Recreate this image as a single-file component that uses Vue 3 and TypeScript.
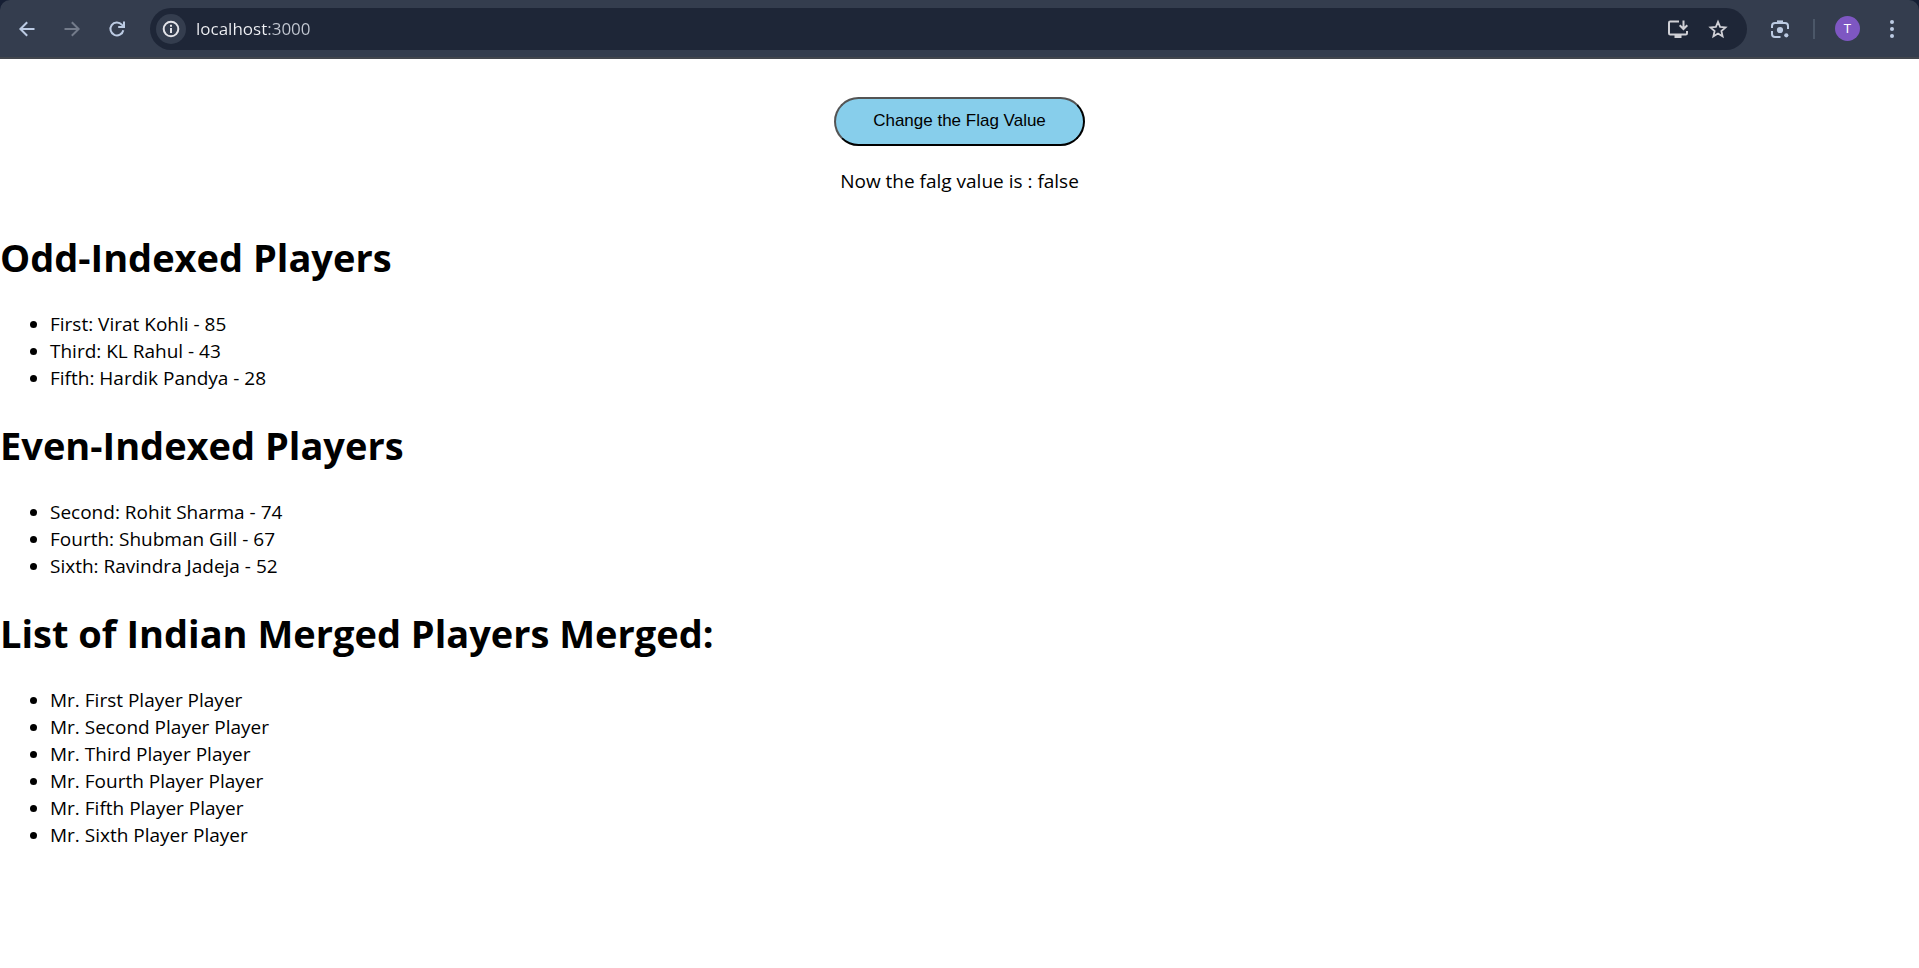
<script setup lang="ts">
import { ref } from 'vue'

interface Player {
  position: string
  name: string
  runs: number
}

const address = ref('localhost:3000')
const flag = ref(false)

const players: Player[] = [
  { position: 'First', name: 'Virat Kohli', runs: 85 },
  { position: 'Second', name: 'Rohit Sharma', runs: 74 },
  { position: 'Third', name: 'KL Rahul', runs: 43 },
  { position: 'Fourth', name: 'Shubman Gill', runs: 67 },
  { position: 'Fifth', name: 'Hardik Pandya', runs: 28 },
  { position: 'Sixth', name: 'Ravindra Jadeja', runs: 52 },
]

const oddPlayers = players.filter((_, index) => index % 2 === 0)
const evenPlayers = players.filter((_, index) => index % 2 === 1)
const mergedPlayers = players.map((player) => `Mr. ${player.position} Player`)
</script>

<template>
  <div class="window">
    <div class="frame">
      <header class="toolbar">
        <nav class="nav" aria-label="History">
          <button class="tool" type="button" aria-label="Back">
            <svg class="icon" viewBox="0 0 20 20" fill="none" stroke="currentColor" stroke-width="2">
              <path d="M17.5 10H4M10.2 3.2 3.4 10l6.8 6.8" />
            </svg>
          </button>
          <button class="tool tool-off" type="button" aria-label="Forward" disabled>
            <svg class="icon" viewBox="0 0 20 20" fill="none" stroke="currentColor" stroke-width="2">
              <path d="M2.5 10H16M9.8 3.2l6.8 6.8-6.8 6.8" />
            </svg>
          </button>
          <button class="tool" type="button" aria-label="Reload">
            <svg class="icon" viewBox="0 0 20 20" fill="none" stroke="currentColor" stroke-width="2">
              <path d="M16.3 11.2A6.5 6.5 0 1 1 14.8 5.6L16.6 7.4" />
              <path d="M17 2.4V8H11.2" />
            </svg>
          </button>
        </nav>

        <div class="omnibox">
          <button class="site-info" type="button" aria-label="View site information">
            <svg class="icon" viewBox="0 0 20 20" fill="none" stroke="currentColor" stroke-width="2">
              <circle cx="10" cy="10" r="7.3" />
              <path d="M10 9v5M10 5.8v2" />
            </svg>
          </button>
          <input v-model="address" class="address" type="text" aria-label="Address" spellcheck="false" />
          <button class="inner-tool" type="button" aria-label="Install app">
            <svg class="wide-icon" viewBox="0 0 22 20" fill="none" stroke="currentColor" stroke-width="2">
              <path d="M12 2.5H3.2Q2 2.5 2 3.7V14.3Q2 15.5 3.2 15.5H18.8Q20 15.5 20 14.3V12" />
              <path d="M16.5 1.5V9.5M12.7 6.2l3.8 3.8 3.8-3.8" />
              <path d="M7.5 17.5h7" stroke-width="3" />
            </svg>
          </button>
          <button class="inner-tool" type="button" aria-label="Bookmark this tab">
            <svg class="icon" viewBox="0 0 20 20" fill="none" stroke="currentColor" stroke-width="1.8">
              <path d="M10 2.9l2.1 5 5.4.5-4.1 3.6 1.2 5.3-4.6-2.8-4.6 2.8 1.2-5.3-4.1-3.6 5.4-.5z" />
            </svg>
          </button>
        </div>

        <button class="lens" type="button" aria-label="Search with Lens">
          <svg class="icon" viewBox="0 0 20 20" fill="none" stroke="currentColor" stroke-width="2">
            <path d="M2 9V7Q2 4 5 4H15Q18 4 18 7V10M2 12V15Q2 18 5 18H10.5" />
            <path d="M7 2.7h6" stroke-width="2.6" />
            <circle cx="10" cy="11" r="3.1" fill="currentColor" stroke="none" />
            <circle cx="16.3" cy="16.3" r="2.1" fill="currentColor" stroke="none" />
          </svg>
        </button>
        <span class="divider"></span>
        <button class="avatar" type="button" aria-label="Profile">T</button>
        <button class="menu" type="button" aria-label="Menu">
          <svg class="icon" viewBox="0 0 20 20" fill="currentColor">
            <circle cx="10" cy="3" r="2" />
            <circle cx="10" cy="10" r="2" />
            <circle cx="10" cy="17" r="2" />
          </svg>
        </button>
      </header>
    </div>

    <main>
      <section class="flag">
        <button class="flag-button" type="button" @click="flag = !flag">Change the Flag Value</button>
        <p>Now the falg value is : {{ flag }}</p>
      </section>

      <h1>Odd-Indexed Players</h1>
      <ul>
        <li v-for="player in oddPlayers" :key="player.position">
          {{ player.position }}: {{ player.name }} - {{ player.runs }}
        </li>
      </ul>

      <h1>Even-Indexed Players</h1>
      <ul>
        <li v-for="player in evenPlayers" :key="player.position">
          {{ player.position }}: {{ player.name }} - {{ player.runs }}
        </li>
      </ul>

      <h1>List of Indian Merged Players Merged:</h1>
      <ul>
        <li v-for="player in mergedPlayers" :key="player">{{ player }} Player</li>
      </ul>
    </main>
  </div>
</template>

<style>
body {
  margin: 0;
  background: #fff;
}
</style>

<style scoped>
.window {
  color: #000;
  font-family: 'Segoe UI', 'Open Sans', 'Noto Sans', sans-serif;
  font-size: 19px;
  line-height: 27px;
}

.frame {
  background: #161f34;
}

.toolbar {
  display: flex;
  align-items: center;
  box-sizing: border-box;
  height: 59px;
  padding: 0 15px 0 11px;
  border-bottom: 2px solid #42464d;
  border-radius: 10px 10px 0 0;
  background: #343d4e;
  color: #bccbe3;
}

.toolbar button {
  display: flex;
  flex: none;
  align-items: center;
  justify-content: center;
  padding: 0;
  border: 0;
  background: none;
  color: inherit;
}

.icon {
  width: 20px;
  height: 20px;
}

.wide-icon {
  width: 22px;
  height: 20px;
}

.nav {
  display: flex;
  gap: 13px;
  margin-right: 17px;
}

.toolbar .tool {
  width: 32px;
  height: 32px;
}

.toolbar .tool-off {
  color: #737b8a;
}

.omnibox {
  display: flex;
  flex: 1;
  align-items: center;
  gap: 10px;
  min-width: 0;
  height: 42px;
  padding: 0 14px 0 6px;
  box-sizing: border-box;
  border-radius: 21px;
  background: #1e2637;
  color: #d0d0d6;
}

.toolbar .site-info {
  width: 30px;
  height: 30px;
  border-radius: 50%;
  background: #343d4e;
  color: #e3e3e8;
}

.address {
  flex: 1;
  min-width: 0;
  padding: 0;
  border: 0;
  outline: 0;
  background: linear-gradient(90deg, #f0f1f5 72px, #c3c8d2 72px) text;
  color: transparent;
  caret-color: #f0f1f5;
  font: 17px/24px 'Segoe UI', 'Open Sans', 'Noto Sans', sans-serif;
}

.toolbar .inner-tool {
  width: 30px;
  height: 30px;
}

.toolbar .lens {
  width: 32px;
  height: 32px;
  margin-left: 17px;
}

.divider {
  width: 2px;
  height: 20px;
  margin: 0 20px 0 17px;
  background: #4b5768;
}

.toolbar .avatar {
  width: 25px;
  height: 25px;
  border-radius: 50%;
  background: #7e57c2;
  color: #fff;
  font: 13px/25px Roboto, sans-serif;
}

.toolbar .menu {
  width: 24px;
  height: 32px;
  margin-left: 20px;
}

.flag {
  padding: 38px 0 9px;
  text-align: center;
}

.flag-button {
  padding: 12px 37px 14px;
  border: 2px outset #000;
  border-radius: 25px;
  background: skyblue;
  color: #000;
  font: 17px/19px Arial, 'Liberation Sans', sans-serif;
}

p {
  margin: 22px 0 0;
}

h1 {
  margin: 27px 0;
  font-size: 38px;
  line-height: 53px;
}

ul {
  margin: 0;
  padding-left: 50px;
}
</style>
